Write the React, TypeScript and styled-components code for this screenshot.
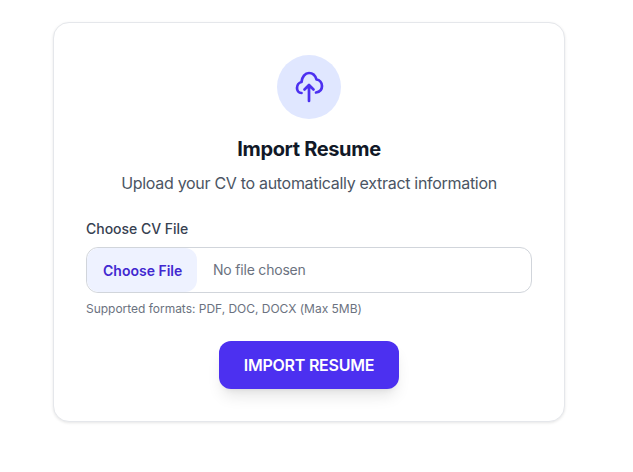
import React from "react";
import styled, { createGlobalStyle } from "styled-components";

const GlobalStyle = createGlobalStyle`
  html, body {
    margin: 0;
    padding: 0;
    background: #fff;
    font-family: Inter, "Liberation Sans", sans-serif;
  }
`;

function UploadIcon() {
  return (
    <svg width="40" height="40" viewBox="0 0 40 40" fill="none" stroke="currentColor" strokeWidth="2.7" strokeLinecap="round" strokeLinejoin="round">
      <path d="M12.5 26C9.5 26 8 23.5 8 21C8 18 10 15.5 12.5 15C13 10 16 6 20 6C24 6 26.5 9 27.5 12.5C30.5 13 33 15.5 33 19C33 22.5 30.5 25 27 25.5" />
      <path d="M20 34V18M15.5 22.5L20 18L24.5 22.5" />
    </svg>
  );
}

function App() {
  return (
    <S.Page>
      <GlobalStyle />
      <S.Card>
        <S.IconCircle>
          <UploadIcon />
        </S.IconCircle>
        <S.Title>Import Resume</S.Title>
        <S.Subtitle>Upload your CV to automatically extract information</S.Subtitle>
        <S.Field>
          <S.Label>Choose CV File</S.Label>
          <S.FileInput>
            <S.FileButton>Choose File</S.FileButton>
            <S.FileName>No file chosen</S.FileName>
          </S.FileInput>
          <S.Hint>Supported formats: PDF, DOC, DOCX (Max 5MB)</S.Hint>
        </S.Field>
        <S.Submit>IMPORT RESUME</S.Submit>
      </S.Card>
    </S.Page>
  );
}

const S = {
  Page: styled.div`
    display: flex;
    justify-content: center;
    width: 633px;
    height: 472px;
    padding: 22px 15px 0 0;
    box-sizing: border-box;
    overflow: hidden;
  `,
  Card: styled.div`
    display: flex;
    flex-direction: column;
    align-items: center;
    box-sizing: border-box;
    width: 512px;
    height: 400px;
    padding: 32px;
    background: #fff;
    border: 1px solid #e5e7eb;
    border-radius: 16px;
    box-shadow: 0 1px 3px rgba(0, 0, 0, 0.1);
  `,
  IconCircle: styled.div`
    display: flex;
    align-items: center;
    justify-content: center;
    width: 64px;
    height: 64px;
    border-radius: 50%;
    background: #e0e7ff;
    color: #4c30f0;
  `,
  Title: styled.h2`
    margin: 16px 0 0;
    font-size: 20px;
    line-height: 28px;
    font-weight: 700;
    letter-spacing: -0.35px;
    color: #111827;
  `,
  Subtitle: styled.p`
    margin: 8px 0 0;
    font-size: 16px;
    line-height: 24px;
    letter-spacing: -0.3px;
    color: #4b5563;
  `,
  Field: styled.div`
    align-self: stretch;
    margin-top: 24px;
  `,
  Label: styled.div`
    font-size: 14px;
    line-height: 20px;
    font-weight: 500;
    letter-spacing: -0.02px;
    color: #374151;
  `,
  FileInput: styled.div`
    display: flex;
    align-items: center;
    box-sizing: border-box;
    height: 46px;
    margin-top: 8px;
    border: 1px solid #d1d5db;
    border-radius: 12px;
    overflow: hidden;
  `,
  FileButton: styled.div`
    display: flex;
    align-items: center;
    box-sizing: border-box;
    width: 110px;
    height: 100%;
    padding-left: 16px;
    background: #eef2ff;
    border-radius: 12px;
    font-size: 14px;
    font-weight: 600;
    color: #4128d0;
  `,
  FileName: styled.span`
    margin-left: 16px;
    padding-bottom: 2px;
    font-size: 14px;
    letter-spacing: -0.2px;
    color: #6b7280;
  `,
  Hint: styled.div`
    margin-top: 8px;
    font-size: 12px;
    line-height: 16px;
    letter-spacing: -0.02px;
    color: #6b7280;
  `,
  Submit: styled.button`
    width: 180px;
    height: 48px;
    margin-top: 24px;
    border: none;
    border-radius: 12px;
    background: #4c30f0;
    color: #fff;
    font-family: inherit;
    font-size: 16px;
    font-weight: 600;
    letter-spacing: -0.23px;
    box-shadow: 0 10px 15px -3px rgba(0, 0, 0, 0.1), 0 4px 6px -4px rgba(0, 0, 0, 0.1);
  `,
};

export default App;
